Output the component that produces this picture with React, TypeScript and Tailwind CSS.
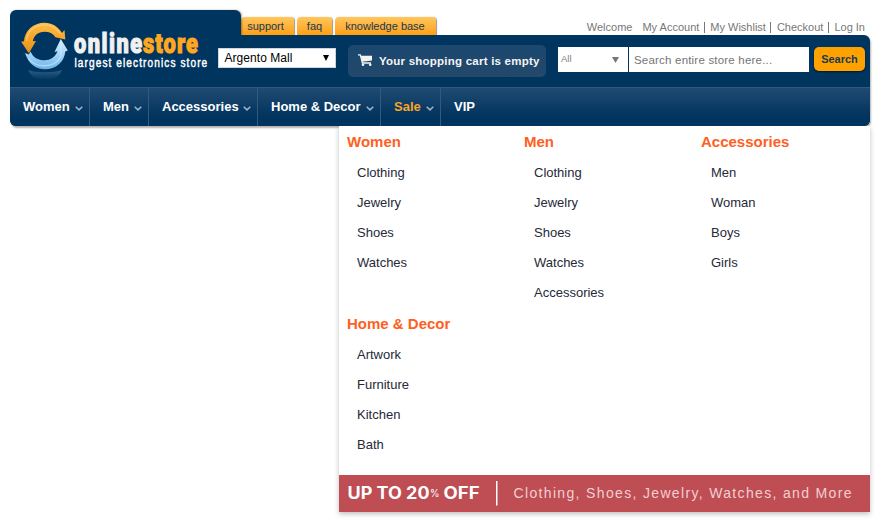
import React from "react";

const nav = [
  { label: "Women", width: "w-[80px]" },
  { label: "Men", width: "w-[59px]" },
  { label: "Accessories", width: "w-[109px]" },
  { label: "Home & Decor", width: "w-[123px]" },
  { label: "Sale", width: "w-[60px]", active: true },
];

const groups = [
  { title: "Women", items: ["Clothing", "Jewelry", "Shoes", "Watches"] },
  { title: "Men", items: ["Clothing", "Jewelry", "Shoes", "Watches", "Accessories"] },
  { title: "Accessories", items: ["Men", "Woman", "Boys", "Girls"] },
  { title: "Home & Decor", items: ["Artwork", "Furniture", "Kitchen", "Bath"] },
];

function Logo() {
  return (
    <svg width="208" height="77" viewBox="10 10 208 77" className="-mt-[25px] block shrink-0">
      <defs>
        <linearGradient id="gold" x1="0" y1="0" x2="0" y2="1">
          <stop offset="0" stopColor="#ffbe4a" />
          <stop offset="0.5" stopColor="#f9a526" />
          <stop offset="1" stopColor="#e0901f" />
        </linearGradient>
        <linearGradient id="sky" x1="0" y1="0" x2="0" y2="1">
          <stop offset="0" stopColor="#d9f0ff" />
          <stop offset="0.5" stopColor="#a5d6f8" />
          <stop offset="1" stopColor="#6db3e8" />
        </linearGradient>
        <linearGradient id="mirror" x1="0" y1="0" x2="0" y2="1">
          <stop offset="0" stopColor="#7fa9cc" stopOpacity="0.35" />
          <stop offset="1" stopColor="#7fa9cc" stopOpacity="0" />
        </linearGradient>
      </defs>
      <path d="M28 70 C36 73 53 73 62 70 Q59 78 50 80 L38 80 Q31 77 28 70Z" fill="url(#mirror)" />
      <path d="M25 53 C28.500 64 36 69.300 45 69.300 C56 69.300 64.300 62 65.300 51.500 L67.800 50.500 L60.800 39 L54.500 52 L57.500 51.300 C55 57.500 50.500 60.300 44.500 60.300 C38 60.300 33 57.500 30.500 51.500 L28.800 54.500Z" fill="url(#sky)" />
      <path d="M28.500 58.500 C35 68 54 69 61 56.500 L61 45" fill="none" stroke="#d4edff" strokeWidth="1.300" opacity="0.6" />
      <path d="M65.300 39.500 L64.500 30 L62 33 C57.500 26 52 22.700 44.500 22.700 C33.500 22.700 24.500 30.500 24 41.300 L21.200 41.800 L28.800 53.300 L36 41 L32.800 41.300 C34 35.500 38 31.800 44.500 31.800 C49.500 31.800 53 33.500 55.500 37.300Z" fill="url(#gold)" />
      <path d="M26.500 41 C27.500 30 36 24.800 44.500 24.800 C52 24.800 57 28.500 60.500 34" fill="none" stroke="#ffdb94" strokeWidth="1.300" opacity="0.6" />
      <g fontFamily="Roboto, sans-serif" fontSize="28" fontWeight="900" strokeWidth="1.100">
        <text transform="translate(74 52.700) scale(0.78 1)" textLength="87.500" fill="#f1f1f1" stroke="#f1f1f1">online</text>
        <text transform="translate(143 52.700) scale(0.78 1)" textLength="70.500" fill="#ffa71f" stroke="#ffa71f">store</text>
      </g>
      <text transform="translate(74.500 67) scale(0.84 1)" textLength="158" fontFamily="Liberation Sans, Arial, sans-serif" fontSize="12" fill="#fff" stroke="#fff" strokeWidth="0.450">largest electronics store</text>
    </svg>
  );
}

function Chevron() {
  return (
    <svg width="8" height="5" viewBox="0 0 8 5" className="mt-[3px]" fill="none">
      <path d="M0.700 0.700 L4 3.900 L7.300 0.700" stroke="#9db4c8" strokeWidth="1.500" />
    </svg>
  );
}

function Tab({ children, className }: { children: string; className: string }) {
  return (
    <a className={`h-[18px] rounded-t-[4px] bg-linear-to-b from-[#ffc65a] to-[#ff9f05] text-center text-[11px] leading-[19px] text-[#173a55] shadow-[1px_0_1px_#999] ${className}`}>
      {children}
    </a>
  );
}

function Group({ title, items }: { title: string; items: string[] }) {
  return (
    <section>
      <h3 className="h-[32px] text-[15px] font-bold leading-[32px] text-[#ff6022]">{title}</h3>
      <ul className="pl-[10px]">
        {items.map((i) => (
          <li key={i} className="h-[30px] text-[13px] leading-[30px] text-[#252938]">{i}</li>
        ))}
      </ul>
    </section>
  );
}

export default function App() {
  return (
    <div className="h-[530px] w-[880px] overflow-hidden bg-white px-[10px] pt-[10px] font-['Liberation_Sans',Arial,sans-serif]">
      <header>
        <div className="flex h-[25px] items-end">
          <div className="z-10 h-[25px] w-[231px] rounded-t-[6px] bg-[#00355f] shadow-[1px_0_2px_rgba(0,0,0,0.35)]" />
          <div className="flex gap-[3px]">
            <Tab className="w-[53px] pr-[4px]">support</Tab>
            <Tab className="w-[35px]">faq</Tab>
            <Tab className="w-[101px] pr-[1px]">knowledge base</Tab>
          </div>
          <div className="ml-auto flex h-[15px] items-center pr-[5px] text-[11px] leading-[15px] text-[#777]">
            <span className="mr-[10px]">Welcome</span>
            <a className="mr-[5px] border-r border-[#777] pr-[5px] leading-[11px]">My Account</a>
            <a className="mr-[6px] border-r border-[#777] pr-[4px] leading-[11px]">My Wishlist</a>
            <a className="mr-[5px] border-r border-[#777] pr-[5px] leading-[11px]">Checkout</a>
            <a>Log In</a>
          </div>
        </div>
        <div className="relative z-10 rounded-b-[6px] rounded-tr-[6px] bg-[#00355f] shadow-[1px_2px_2px_rgba(0,0,0,0.3)]">
          <div className="flex h-[52px] items-start">
            <Logo />
            <div className="mt-[13px] flex h-[20px] w-[118px] items-center justify-between border border-[#ccd6df] bg-white pl-[5.5px] pr-[6px] text-[12px] text-black">
              <span className="tracking-[0.05px]">Argento Mall</span>
              <svg width="6" height="6" viewBox="0 0 6 6"><path d="M0 0H6L3 6Z" fill="#000" /></svg>
            </div>
            <div className="ml-[12px] mt-[10px] flex h-[32px] w-[198px] items-center rounded-[5px] bg-linear-to-b from-[#1b4770] to-[#23496b] pl-[10px] text-[11px] font-bold text-[#f4f4f4]">
              <svg width="14" height="12" viewBox="0 0 14 12" className="mr-[7px] shrink-0 -translate-y-px">
                <path d="M0 0.800H2.300L4.400 9H13" fill="none" stroke="#f4f4f4" strokeWidth="1.300" />
                <path d="M2.800 1.700H14V6.500L4.400 7.800Z" fill="#f4f4f4" />
                <circle cx="5" cy="10.700" r="1.300" fill="#f4f4f4" />
                <circle cx="12.200" cy="10.700" r="1.300" fill="#f4f4f4" />
              </svg>
              <span className="mt-px whitespace-nowrap text-[11.5px] tracking-[0.23px]">Your shopping cart is empty</span>
            </div>
            <div className="ml-[12px] mt-[12px] flex h-[25px] w-[70px] items-center justify-between bg-white pl-[3px] pr-[9px] text-[9.5px] text-[#808080]">
              <span>All</span>
              <svg width="7" height="6" viewBox="0 0 7 6"><path d="M0 0H7L3.500 6Z" fill="#777" /></svg>
            </div>
            <div className="ml-px mt-[12px] h-[25px] w-[180px] bg-white pl-[5px] text-[11.5px] leading-[27px] tracking-[0.2px] text-[#757575]">Search entire store here...</div>
            <button className="ml-[5px] mt-[12px] h-[24px] w-[51px] rounded-[5px] bg-[#ffa200] text-[11px] font-bold leading-[24px] text-[#173a55] shadow-[0_1px_2px_rgba(0,0,0,0.6)]">Search</button>
          </div>
          <nav className="flex h-[39px] overflow-hidden rounded-b-[6px] border-t border-[#2f587b] bg-linear-to-b from-[#1f4b72] via-[#0b3b65] via-50% to-[#00335d] to-80% text-[13px] font-bold leading-[38px] text-white">
            {nav.map((n) => (
              <a key={n.label} className={`flex items-center justify-between border-r border-[#315a7c] pl-[13px] pr-[6px] ${n.width} ${n.active ? "text-[#f9a526]" : ""}`}>
                {n.label}
                <Chevron />
              </a>
            ))}
            <a className="pl-[13px]">VIP</a>
          </nav>
        </div>
      </header>
      <div className="relative z-20 ml-[329px] flex h-[386px] w-[531px] flex-col bg-white shadow-[0_2px_5px_rgba(0,0,0,0.25)] [clip-path:inset(0_-10px_-10px_-10px)]">
        <div className="grid grow grid-cols-[177px_177px_177px] grid-rows-[182px_167px] pl-[8px]">
          {groups.map((g) => <Group key={g.title} {...g} />)}
        </div>
        <div className="flex h-[37px] items-center bg-[#be4d54] text-white">
          <svg width="531" height="37" viewBox="0 0 531 37">
            <g fontFamily="Inter, sans-serif" fontWeight="700" fill="#fff">
              <text x="8.500" y="24" fontSize="17" textLength="82" lengthAdjust="spacingAndGlyphs">UP TO 20</text>
              <text x="91" y="21.500" fontSize="10" fontWeight="400" textLength="9.500" lengthAdjust="spacingAndGlyphs">%</text>
              <text x="104.500" y="24" fontSize="17" textLength="36" lengthAdjust="spacingAndGlyphs">OFF</text>
            </g>
            <rect x="157" y="6" width="1.500" height="24.500" fill="#fff" />
            <text x="174.500" y="22.500" fontFamily="Liberation Sans, Arial, sans-serif" fontSize="14" fill="#f3cfd1" textLength="338">Clothing, Shoes, Jewelry, Watches, and More</text>
          </svg>
        </div>
      </div>
    </div>
  );
}
